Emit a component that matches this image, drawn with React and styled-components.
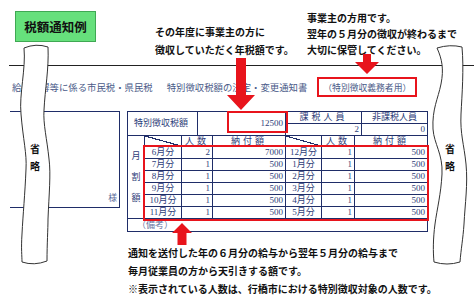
import React from "react";
import styled, { createGlobalStyle, css } from "styled-components";

const NAVY = "#1f2d68";
const INK = "#2e3d78";
const RED = "#e8141c";

const Global = createGlobalStyle`
  html, body { margin: 0; padding: 0; background: #fff; }
  #root { width: 474px; height: 297px; overflow: hidden; }
`;

const Page = styled.div`
  position: relative;
  width: 474px;
  height: 297px;
  overflow: hidden;
  background: #fff;
  font-family: "Noto Sans CJK JP", sans-serif;
`;

const TopBar = styled.div`
  display: flex;
  align-items: flex-start;
  margin-left: 9px;
  height: 65px;
  border-bottom: 1px solid #222;
`;

const Badge = styled.div`
  margin: 11px 0 0 6px;
  width: 81px;
  height: 31px;
  box-sizing: border-box;
  background: #66e07c;
  border: 1.5px solid #3fa853;
  display: flex;
  align-items: center;
  justify-content: center;
  font-weight: 700;
  font-size: 12.5px;
  color: #111;
`;

const Note = styled.div`
  font-weight: 700;
  font-size: 10px;
  color: #111;
  white-space: nowrap;
  line-height: ${(p) => p.$lh}px;
  margin: ${(p) => p.$m};
  width: ${(p) => (p.$w ? `${p.$w}px` : "auto")};
`;

const TitleRow = styled.div`
  display: flex;
  align-items: center;
  height: 42px;
  padding-left: 12px;
  font-family: "Liberation Serif", "Noto Sans CJK JP", serif;
  font-size: 9.4px;
  color: #4a5a88;
  white-space: nowrap;
`;

const TitleGap = styled.span`
  display: inline-block;
  width: 14px;
`;

const Stamp = styled.div`
  margin-left: 10px;
  width: 100px;
  height: 20px;
  box-sizing: border-box;
  border: 2px solid ${RED};
  display: flex;
  align-items: center;
  justify-content: center;
  font-size: 8.8px;
`;

const Body = styled.div`
  display: flex;
  align-items: flex-start;
  margin-top: 3px;
  padding-left: 10px;
`;

const AddressBox = styled.div`
  width: 110px;
  height: 97px;
  box-sizing: border-box;
  border-top: 1px solid ${NAVY};
  border-right: 1px solid ${NAVY};
  border-bottom: 1px solid ${NAVY};
  display: flex;
  align-items: flex-end;
  justify-content: flex-end;
  padding: 0 2px 3px 0;
  font-size: 8.8px;
  color: #5a6a99;
`;

const TableWrap = styled.div`
  position: relative;
  margin-left: 7px;
  width: 301px;
  box-sizing: border-box;
  border-top: 1px solid ${NAVY};
  border-left: 1px solid ${NAVY};
  font-family: "Liberation Serif", "Noto Sans CJK JP", serif;
`;

const TopGrid = styled.div`
  display: grid;
  grid-template-columns: 70px 88px 76px 66px;
  grid-template-rows: 12px 12px;
`;

const LowerGrid = styled.div`
  display: grid;
  grid-template-columns: 17px 37px 31px 73px 36px 33px 73px;
  grid-template-rows: 11px repeat(6, 12px) 13px;
`;

const Cell = styled.div`
  box-sizing: border-box;
  border-right: 1px solid ${NAVY};
  border-bottom: 1px solid ${NAVY};
  display: flex;
  align-items: center;
  justify-content: ${(p) =>
    p.$align === "right" ? "flex-end" : p.$align === "left" ? "flex-start" : "center"};
  padding: ${(p) =>
    p.$align === "right" ? "0 2px 0 0" : p.$align === "left" ? "0 0 0 6px" : "0"};
  font-size: 9px;
  color: ${INK};
  line-height: 1;
  white-space: nowrap;
  overflow: hidden;
  ${(p) => p.$rows && css`grid-row: span ${p.$rows};`}
  ${(p) => p.$spaced && css`letter-spacing: 3px;`}
  ${(p) =>
    p.$diag &&
    css`
      background: linear-gradient(
        to top right,
        transparent calc(50% - 0.6px),
        ${NAVY} calc(50% - 0.6px),
        ${NAVY} calc(50% + 0.6px),
        transparent calc(50% + 0.6px)
      );
    `}
`;

const VerticalLabel = styled(Cell)`
  grid-row: 1 / span 7;
  flex-direction: column;
  gap: 12px;
  font-size: 9px;
`;

const RemarkCell = styled(Cell)`
  grid-column: 1 / -1;
  justify-content: flex-start;
  padding-left: 9px;
  color: #6a78a4;
`;

const RedFrame = styled.div`
  position: absolute;
  box-sizing: border-box;
  border: 2px solid ${RED};
  left: ${(p) => p.$x}px;
  top: ${(p) => p.$y}px;
  width: ${(p) => p.$w}px;
  height: ${(p) => p.$h}px;
  pointer-events: none;
`;

const Notes = styled.div`
  margin: 12px 0 0 128px;
  font-weight: 700;
  font-size: 10px;
  line-height: 18px;
  color: #111;
  white-space: nowrap;
`;

const Overlay = styled.svg`
  position: absolute;
  left: ${(p) => p.$x}px;
  top: ${(p) => p.$y}px;
  overflow: visible;
`;

const BandBox = styled.div`
  position: absolute;
  left: ${(p) => p.$x}px;
  top: 44px;
  width: ${(p) => p.$w}px;
  height: 222px;
`;

const BandShape = styled.svg`
  position: absolute;
  inset: 0;
`;

const BandText = styled.div`
  position: absolute;
  top: 99px;
  left: ${(p) => p.$cx - 6}px;
  width: 12px;
  display: flex;
  flex-direction: column;
  align-items: center;
  gap: 5px;
  font-weight: 700;
  font-size: 10px;
  line-height: 12px;
  color: #111;
`;

function Band({ x, w, d, cx }) {
  return (
    <BandBox $x={x} $w={w}>
      <BandShape width={w} height={222} viewBox={`0 0 ${w} 222`}>
        <path d={d} fill="#fff" stroke="#333" strokeWidth="1" />
      </BandShape>
      <BandText $cx={cx}>
        <span>省</span>
        <span>略</span>
      </BandText>
    </BandBox>
  );
}

const monthsLeft = [
  ["6月分", 2, 7000],
  ["7月分", 1, 500],
  ["8月分", 1, 500],
  ["9月分", 1, 500],
  ["10月分", 1, 500],
  ["11月分", 1, 500],
];
const monthsRight = [
  ["12月分", 1, 500],
  ["1月分", 1, 500],
  ["2月分", 1, 500],
  ["3月分", 1, 500],
  ["4月分", 1, 500],
  ["5月分", 1, 500],
];

export default function App() {
  return (
    <Page>
      <Global />
      <TopBar>
        <Badge>税額通知例</Badge>
        <Note $lh={18} $m="23px 0 0 59px" $w={140}>
          <div>その年度に事業主の方に</div>
          <div>徴収していただく年税額です。</div>
        </Note>
        <Note $lh={16} $m="10px 0 0 12px">
          <div>事業主の方用です。</div>
          <div>翌年の５月分の徴収が終わるまで</div>
          <div>大切に保管してください。</div>
        </Note>
      </TopBar>

      <TitleRow>
        <span>給与所得等に係る市民税・県民税</span>
        <TitleGap />
        <span>特別徴収税額の決定・変更通知書</span>
        <Stamp>（特別徴収義務者用）</Stamp>
      </TitleRow>

      <Body>
        <AddressBox>様</AddressBox>
        <TableWrap>
          <TopGrid>
            <Cell $rows={2} $align="left">特別徴収税額</Cell>
            <Cell $rows={2} $align="right">12500</Cell>
            <Cell $spaced>課税人員</Cell>
            <Cell>非課税人員</Cell>
            <Cell $align="right">2</Cell>
            <Cell $align="right">0</Cell>
          </TopGrid>
          <LowerGrid>
            <VerticalLabel>
              <span>月</span>
              <span>割</span>
              <span>額</span>
            </VerticalLabel>
            <Cell $diag />
            <Cell $spaced>人数</Cell>
            <Cell $spaced>納付額</Cell>
            <Cell $diag />
            <Cell $spaced>人数</Cell>
            <Cell $spaced>納付額</Cell>
            {monthsLeft.map((l, i) => {
              const r = monthsRight[i];
              return (
                <React.Fragment key={l[0]}>
                  <Cell>{l[0]}</Cell>
                  <Cell $align="right">{l[1]}</Cell>
                  <Cell $align="right">{l[2]}</Cell>
                  <Cell>{r[0]}</Cell>
                  <Cell $align="right">{r[1]}</Cell>
                  <Cell $align="right">{r[2]}</Cell>
                </React.Fragment>
              );
            })}
            <RemarkCell>（備考）</RemarkCell>
          </LowerGrid>
          <RedFrame $x={99} $y={-1} $w={61} $h={22} />
          <RedFrame $x={15} $y={33} $w={286} $h={76} />
        </TableWrap>
      </Body>

      <Notes>
        <div>通知を送付した年の６月分の給与から翌年５月分の給与まで</div>
        <div>毎月従業員の方から天引きする額です。</div>
        <div>※表示されている人数は、行橋市における特別徴収対象の人数です。</div>
      </Notes>

      <Band
        x={16}
        w={40}
        cx={19}
        d="M8,4 C10,25 3,50 5,70 C7,95 11,110 10,125 C9,150 7,170 6,190 C5,205 6,212 6,218 Q18,222 31,217 C31,200 32,185 32,175 C33,150 35,130 33,115 C31,95 27,80 28,66 C29,45 33,25 32,3 Q20,-1 8,4 Z"
      />
      <Band
        x={428}
        w={44}
        cx={22}
        d="M9,4 C14,15 16,25 13,40 C10,55 4,65 5,85 C6,100 15,110 14,130 C13,150 9,165 7,180 C5,195 5,208 6,218 Q19,222 32,218 C33,205 35,195 36,180 C37,160 40,140 38,120 C36,100 32,90 33,70 C34,50 36,25 34,3 Q22,0 9,4 Z"
      />

      <Overlay $x={227} $y={58} width="28" height="52" viewBox="0 0 28 52">
        <polygon points="9,0 19,0 19,37 28,37 14,52 0,37 9,37" fill={RED} />
      </Overlay>
      <Overlay $x={355} $y={54} width="24" height="20" viewBox="0 0 24 20">
        <polygon points="8,0 16,0 16,8 24,8 12,20 0,8 8,8" fill={RED} />
      </Overlay>
      <Overlay $x={172} $y={223} width="20" height="22" viewBox="0 0 20 22">
        <polygon points="10,0 20,10 14.5,10 14.5,22 5.5,22 5.5,10 0,10" fill={RED} />
      </Overlay>
    </Page>
  );
}
